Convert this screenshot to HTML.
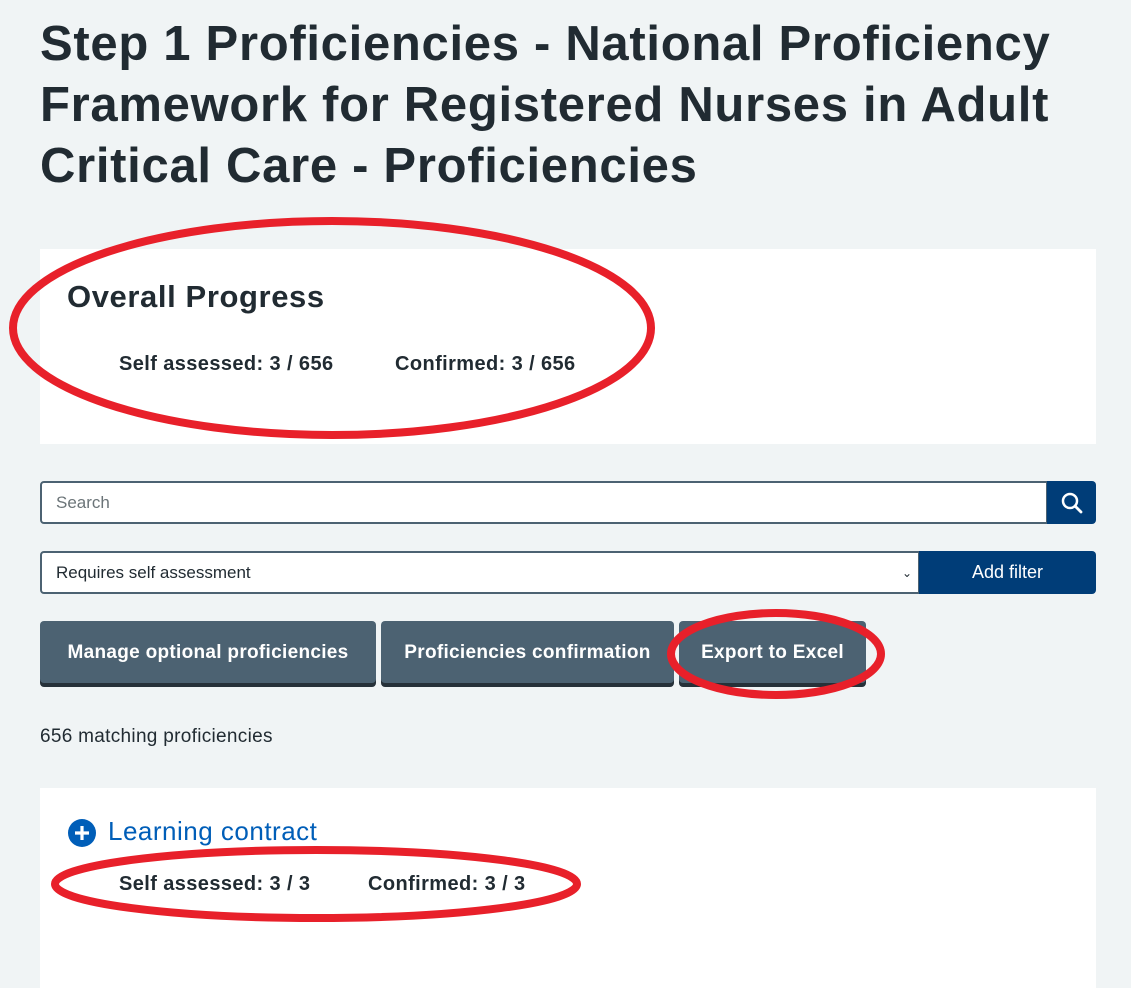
<!DOCTYPE html>
<html><head><style>
body{margin:0;width:1131px;height:926px;background:#f0f4f5;font-family:"Liberation Sans",sans-serif;color:#212b32;position:relative;overflow:hidden}
h1{position:absolute;left:40px;top:14px;margin:0;font-size:49px;line-height:61px;font-weight:bold;width:1090px;letter-spacing:0.7px}
.card{position:absolute;left:40px;width:1056px;background:#fff}
.b{font-weight:bold;font-size:20px;position:absolute;white-space:nowrap;letter-spacing:0.4px}
.inp{position:absolute;left:40px;box-sizing:border-box;border:2px solid #4c6272;border-radius:4px 0 0 4px;background:#fff;font-size:17px;padding-left:14px;display:flex;align-items:center}
.blue{position:absolute;background:#003d78;color:#fff;border-radius:0 4px 4px 0;display:flex;align-items:center;justify-content:center;font-size:18px}
.btn{position:absolute;top:621px;height:62px;background:#4c6272;color:#fff;font-weight:bold;font-size:19px;letter-spacing:0.3px;display:flex;align-items:center;justify-content:center;border-radius:4px;box-shadow:0 4px 0 #263139;padding-top:2px;box-sizing:border-box}
</style></head><body>
<h1>Step 1 Proficiencies - National Proficiency Framework for Registered Nurses in Adult Critical Care - Proficiencies</h1>
<div class="card" style="top:249px;height:195px">
<div style="position:absolute;left:27px;top:30px;font-size:31px;font-weight:bold;letter-spacing:0.6px">Overall Progress</div>
<div class="b" style="left:79px;top:104px">Self assessed: 3 / 656</div>
<div class="b" style="left:355px;top:104px">Confirmed: 3 / 656</div>
</div>
<div class="inp" style="top:481px;width:1008px;height:43px;color:#6b7478">Search</div>
<div class="blue" style="left:1047px;top:481px;width:49px;height:43px"><svg width="24" height="24" viewBox="0 0 24 24"><circle cx="10" cy="10" r="7" fill="none" stroke="#fff" stroke-width="2.5"/><path d="M15 15l6 6" stroke="#fff" stroke-width="2.8" stroke-linecap="round"/></svg></div>
<div class="inp" style="top:551px;width:880px;height:43px;color:#212b32">Requires self assessment<span style="position:absolute;right:6px;font-size:12px">&#8964;</span></div>
<div class="blue" style="left:919px;top:551px;width:177px;height:43px">Add filter</div>
<div class="btn" style="left:40px;width:336px">Manage optional proficiencies</div>
<div class="btn" style="left:381px;width:293px">Proficiencies confirmation</div>
<div class="btn" style="left:679px;width:187px">Export to Excel</div>
<div style="position:absolute;left:40px;top:726px;font-size:19px;letter-spacing:0.3px">656 matching proficiencies</div>
<div class="card" style="top:788px;height:200px">
<svg style="position:absolute;left:27px;top:30px" width="30" height="30" viewBox="0 0 30 30"><circle cx="15" cy="15" r="14" fill="#005eb8"/><path d="M15 8v14M8 15h14" stroke="#fff" stroke-width="3.2"/></svg>
<div style="position:absolute;left:68px;top:28px;font-size:26px;color:#005eb8;letter-spacing:0.5px">Learning contract</div>
<div class="b" style="left:79px;top:85px">Self assessed: 3 / 3</div>
<div class="b" style="left:328px;top:85px">Confirmed: 3 / 3</div>
</div>
<svg style="position:absolute;left:0;top:0" width="1131" height="926"><g fill="none" stroke="#e8202a" stroke-width="8"><ellipse cx="332" cy="328" rx="319" ry="107"/><ellipse cx="776" cy="654" rx="105" ry="41"/><ellipse cx="316" cy="884" rx="261" ry="34"/></g></svg>
</body></html>
